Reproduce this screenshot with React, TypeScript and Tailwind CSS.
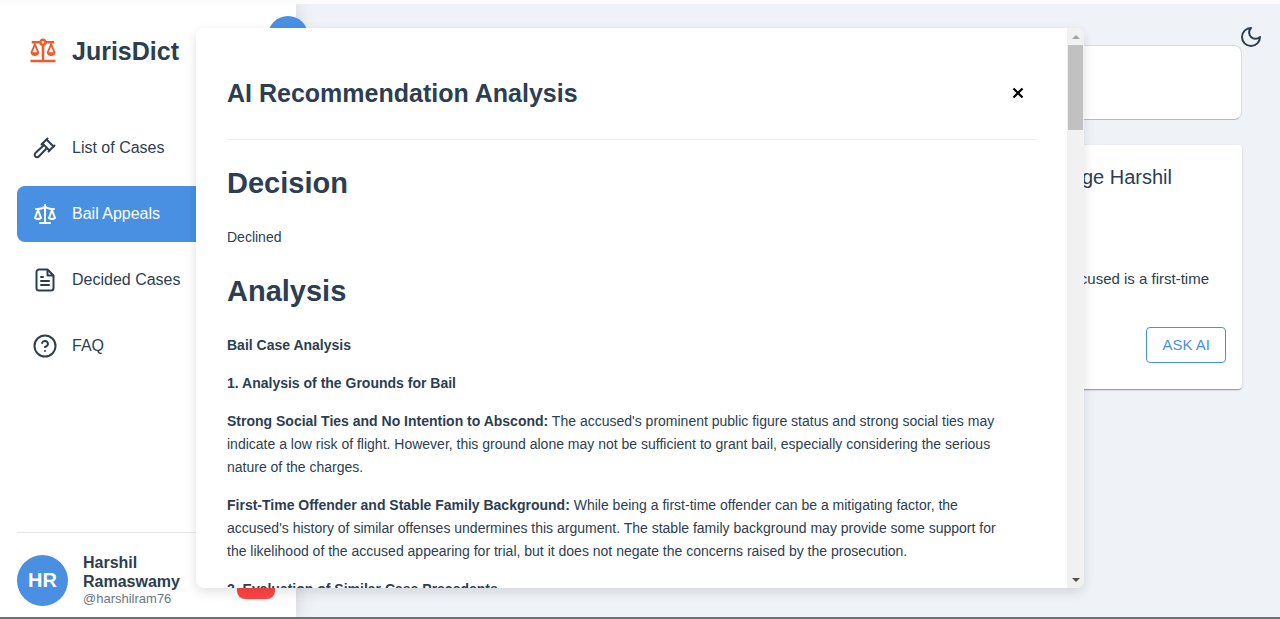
import type { ReactNode } from "react";
import { MdBalance } from "react-icons/md";
import { LuScale, LuMoon } from "react-icons/lu";

function LineIcon({ children }: { children: ReactNode }) {
  return (
    <svg width="24" height="24" viewBox="0 0 24 24" fill="none" stroke="currentColor" strokeWidth="2" strokeLinecap="round" strokeLinejoin="round">
      {children}
    </svg>
  );
}

function GavelIcon() {
  return (
    <LineIcon>
      <path d="m13.500 12.500-7.700 8a2.400 2.400 0 1 1-3.400-3.400l8.100-7.600" />
      <path d="m15.500 15.500 6-6" />
      <path d="m8.500 8.500 6-6" />
      <path d="m9.500 7.500 7 7" />
      <path d="m20.500 10.500-7-7" />
    </LineIcon>
  );
}

function FileTextIcon() {
  return (
    <LineIcon>
      <path d="M14.500 1.500H6a2.500 2.500 0 0 0-2.500 2.500v16A2.500 2.500 0 0 0 6 22.500h12a2.500 2.500 0 0 0 2.500-2.500V7.500z" />
      <path d="M14.500 2v5.500H20" />
      <path d="M16 13H8M16 17H8M10 9H8" />
    </LineIcon>
  );
}

function HelpIcon() {
  return (
    <LineIcon>
      <circle cx="12" cy="12" r="10.500" />
      <path d="M9.090 9a3 3 0 0 1 5.830 1c0 2-3 3-3 3" />
      <path d="M12 17h.01" />
    </LineIcon>
  );
}

function NavItem({ icon, label, active = false }: { icon: ReactNode; label: string; active?: boolean }) {
  return (
    <a
      href="#"
      aria-current={active ? "page" : undefined}
      className={
        active
          ? "flex h-14 items-center gap-[15px] rounded-lg bg-[#4a90e2] px-4 text-white"
          : "flex h-14 items-center gap-[15px] rounded-lg px-4 text-[#2c3e50]"
      }
    >
      {icon}
      <span className="whitespace-nowrap">{label}</span>
    </a>
  );
}

function Sidebar() {
  return (
    <aside className="relative flex w-[296px] shrink-0 flex-col bg-white px-[17px] shadow-[2px_0_16px_rgba(0,0,0,0.12)]">
      <button aria-label="Collapse sidebar" className="absolute top-3 -right-3 size-10 rounded-full bg-[#4a90e2]" />
      <div className="flex items-center gap-[14px] px-[11px] pt-[27px]">
        <MdBalance size={30} className="text-[#f1592a]" />
        <span className="text-[25px] leading-10 font-bold">JurisDict</span>
      </div>
      <nav className="mt-[49px] flex flex-col gap-[10px] text-base">
        <NavItem icon={<GavelIcon />} label="List of Cases" />
        <NavItem icon={<LuScale size={24} />} label="Bail Appeals" active />
        <NavItem icon={<FileTextIcon />} label="Decided Cases" />
        <NavItem icon={<HelpIcon />} label="FAQ" />
      </nav>
      <div className="mt-auto flex items-center gap-[15px] border-t border-[#e6e8eb] pt-5 pr-1 pb-[10px]">
        <div className="flex size-[51px] shrink-0 items-center justify-center rounded-full bg-[#4a90e2] text-xl font-bold text-white">HR</div>
        <div className="flex-1">
          <p className="text-base leading-[19px] font-bold">
            Harshil
            <br />
            Ramaswamy
          </p>
          <p className="text-[13px] leading-4 text-[#6b7683]">@harshilram76</p>
        </div>
        <button aria-label="Log out" className="h-[38px] w-[38px] rounded-lg bg-[#ff4444]" />
      </div>
    </aside>
  );
}

function CaseArea() {
  return (
    <main className="relative flex-1 pt-[41px] pr-[38px] pl-10">
      <button aria-label="Dark mode" className="absolute top-[21px] right-[17px]">
        <LuMoon size={24} />
      </button>
      <div className="h-[75px] rounded-lg border border-[#d9dce0] border-b-[#b8bbc0] bg-white" />
      <section className="mt-[25px] flex flex-col items-end rounded bg-white px-4 pt-4 pb-[26px] shadow-[0_2px_1px_-1px_rgba(0,0,0,0.2),0_1px_1px_rgba(0,0,0,0.14),0_1px_3px_rgba(0,0,0,0.12)]">
        <h2 className="mr-[54px] text-xl leading-8">Judge Harshil</h2>
        <p className="mt-[74px] mr-[17px] text-[15px] leading-6">accused is a first-time</p>
        <button className="mt-9 rounded border border-[#4a90e2] px-[15px] py-[5px] text-[15px] leading-6 text-[#4a90e2]">ASK AI</button>
      </section>
    </main>
  );
}

function Scrollbar() {
  return (
    <div className="flex w-[17px] shrink-0 flex-col items-center bg-[#f1f1f1]">
      <div className="flex h-[17px] items-center">
        <svg width="8" height="4" viewBox="0 0 8 4"><path d="M0 4 4 0l4 4z" fill="#a3a3a3" /></svg>
      </div>
      <div className="h-[85px] w-[15px] bg-[#c1c1c1]" />
      <div className="mt-auto flex h-[17px] items-center">
        <svg width="8" height="4" viewBox="0 0 8 4"><path d="M0 0h8L4 4z" fill="#505050" /></svg>
      </div>
    </div>
  );
}

function AnalysisDialog() {
  return (
    <div className="absolute inset-x-0 -top-1 -bottom-0.5 flex justify-center pt-7 pb-[31px]">
      <div role="dialog" aria-label="AI Recommendation Analysis" className="flex w-full max-w-[888px] overflow-hidden rounded-lg bg-white shadow-[0_4px_12px_rgba(0,0,0,0.12)]">
        <div className="h-full flex-1 overflow-hidden px-[31px]">
          <header className="flex items-center justify-between border-b border-[#eaecee] pt-[45px] pr-3 pb-[26px]">
            <h2 className="text-[25px] leading-10 font-bold">AI Recommendation Analysis</h2>
            <button aria-label="Close" className="text-black">
              <svg width="12" height="12" viewBox="0 0 12 12" stroke="currentColor" strokeWidth="2.200"><path d="m1.500 1.500 9 9m0-9-9 9" /></svg>
            </button>
          </header>
          <article className="flex flex-col gap-[15px] text-sm leading-[23px]">
            <h1 className="mt-[21px] mb-[5px] text-[29px] leading-[45px] font-bold">Decision</h1>
            <p>Declined</p>
            <h1 className="my-[5px] text-[29px] leading-[45px] font-bold">Analysis</h1>
            <p className="font-bold">Bail Case Analysis</p>
            <p className="font-bold">1. Analysis of the Grounds for Bail</p>
            <p>
              <strong>Strong Social Ties and No Intention to Abscond:</strong> The accused's prominent public figure status and strong social ties may
              <br />
              indicate a low risk of flight. However, this ground alone may not be sufficient to grant bail, especially considering the serious
              <br />
              nature of the charges.
            </p>
            <p>
              <strong>First-Time Offender and Stable Family Background:</strong> While being a first-time offender can be a mitigating factor, the
              <br />
              accused's history of similar offenses undermines this argument. The stable family background may provide some support for
              <br />
              the likelihood of the accused appearing for trial, but it does not negate the concerns raised by the prosecution.
            </p>
            <p className="font-bold">2. Evaluation of Similar Case Precedents</p>
          </article>
        </div>
        <Scrollbar />
      </div>
    </div>
  );
}

export default function App() {
  return (
    <div className="relative flex h-screen flex-col overflow-hidden border-t-4 border-b-2 border-t-[#fcfcfc] border-b-[#6e7076] bg-[#eff2f7] font-['Liberation_Sans',Arial,sans-serif] text-[#2c3e50]">
      <div className="flex min-h-0 flex-1">
        <Sidebar />
        <CaseArea />
      </div>
      <AnalysisDialog />
    </div>
  );
}
